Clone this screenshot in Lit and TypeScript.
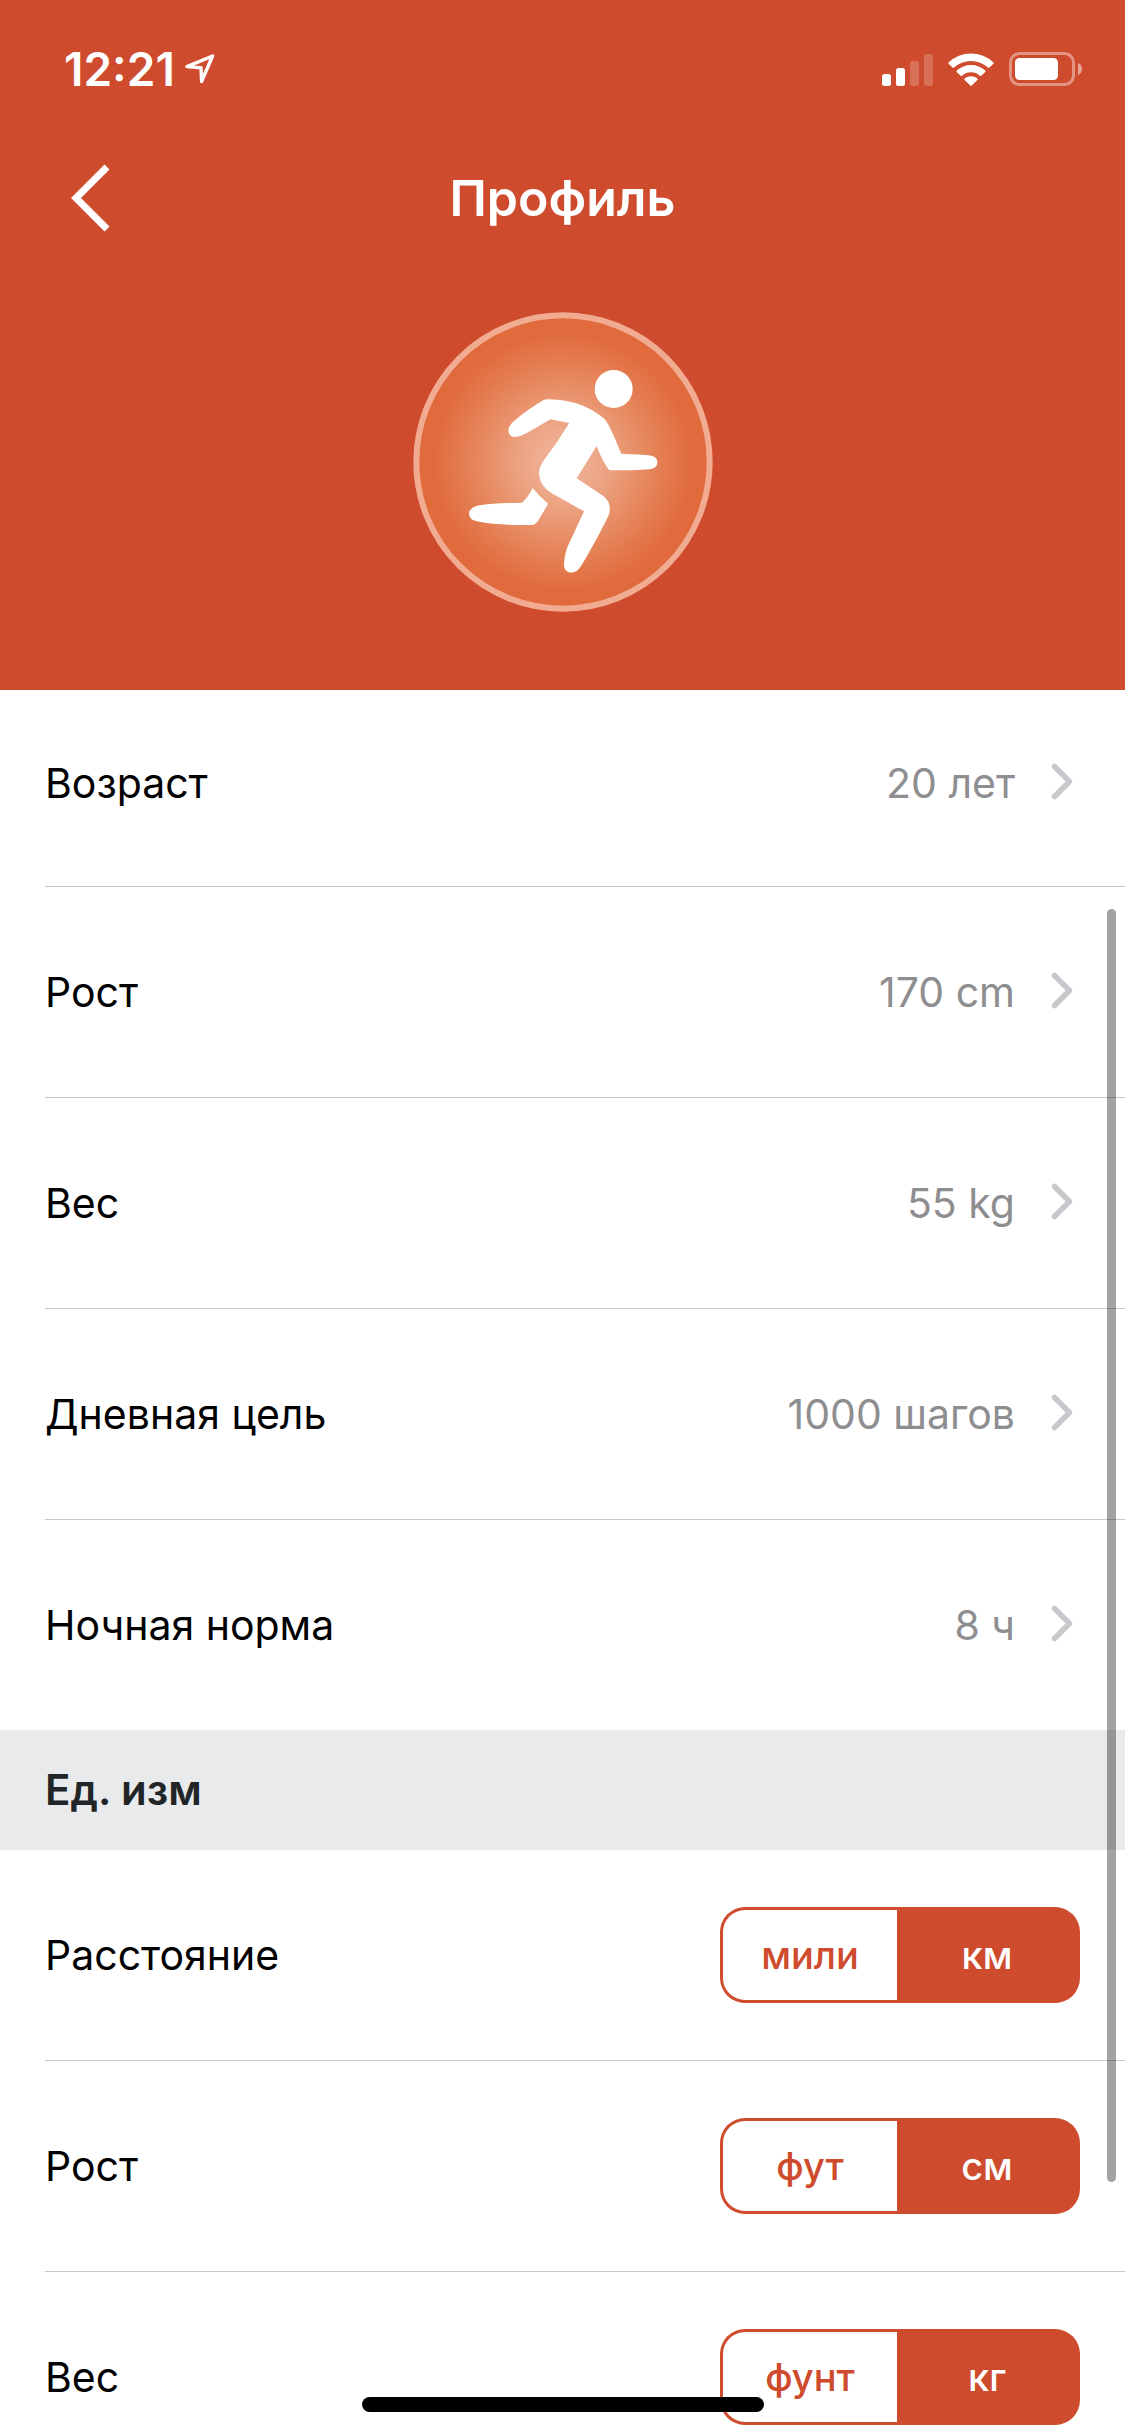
import { LitElement, html, css, svg } from "lit";
import { customElement, property, state } from "lit/decorators.js";

interface Detail {
  label: string;
  value: string;
}

interface Unit {
  id: string;
  label: string;
  options: [string, string];
}

const DETAILS: Detail[] = [
  { label: "Возраст", value: "20 лет" },
  { label: "Рост", value: "170 cm" },
  { label: "Вес", value: "55 kg" },
  { label: "Дневная цель", value: "1000 шагов" },
  { label: "Ночная норма", value: "8 ч" },
];

const UNITS: Unit[] = [
  { id: "distance", label: "Расстояние", options: ["мили", "км"] },
  { id: "height", label: "Рост", options: ["фут", "см"] },
  { id: "weight", label: "Вес", options: ["фунт", "кг"] },
];

@customElement("status-bar")
export class StatusBar extends LitElement {
  static styles = css`
    :host {
      display: flex;
      align-items: center;
      justify-content: space-between;
      height: 138px;
      padding: 0 43px 0 64px;
      color: #fff;
    }
    .clock,
    .indicators {
      display: flex;
      align-items: center;
    }
    .clock {
      gap: 10px;
      font-size: 46px;
      line-height: 54px;
      font-weight: 600;
    }
    .indicators {
      gap: 15px;
    }
    svg {
      display: block;
    }
  `;

  render() {
    const bars = [12, 18, 25, 32];
    return html`
      <div class="clock">
        <span>12:21</span>
        <svg width="30" height="30" viewBox="0 0 30 30" aria-hidden="true">
          <path d="M2 12.600 27.600 2 16.600 27.500 16 13.800Z" fill="none" stroke="#fff" stroke-width="3.400" stroke-linejoin="round" />
        </svg>
      </div>
      <div class="indicators">
        <svg width="51" height="33" viewBox="0 0 51 33" aria-hidden="true">
          ${bars.map(
            (h, i) => svg`<rect x=${i * 14} y=${33 - h} width="9" height=${h} rx="2.5" fill="#fff" fill-opacity=${i < 2 ? 1 : 0.2} />`
          )}
        </svg>
        <svg width="46" height="33" viewBox="0 0 46 33" aria-hidden="true">
          <g fill="#fff">
            <path d="M.6 9.4A32.4 32.4 0 0 1 45.4 9.4Q46 10.1 45.4 10.8L41.4 14.6Q40.7 15.2 40 14.6A25 25 0 0 0 6 14.6Q5.3 15.2 4.6 14.6L.6 10.8Q0 10.1 .6 9.4Z" />
            <path d="M8.7 17.6A20.8 20.8 0 0 1 37.3 17.6Q37.9 18.3 37.3 19L33.3 22.7Q32.6 23.3 31.9 22.7A13.2 13.2 0 0 0 14.1 22.7Q13.4 23.3 12.7 22.7L8.7 19Q8.1 18.3 8.7 17.6Z" />
            <path d="M16.6 25.6A9.6 9.6 0 0 1 29.4 25.6Q30 26.2 29.4 26.9L23.7 32.6Q23 33.2 22.3 32.6L16.6 26.9Q16 26.2 16.6 25.6Z" />
          </g>
        </svg>
        <svg width="73" height="34" viewBox="0 0 73 34" aria-hidden="true">
          <rect x="1.5" y="1.5" width="63" height="31" rx="9" fill="none" stroke="#fff" stroke-opacity=".4" stroke-width="3" />
          <rect x="6" y="6" width="43" height="22" rx="4.5" fill="#fff" />
          <path d="M69 11Q73 12.600 73 17Q73 21.400 69 23Z" fill="#fff" fill-opacity=".5" />
        </svg>
      </div>
    `;
  }
}

@customElement("profile-avatar")
export class ProfileAvatar extends LitElement {
  static styles = css`
    :host {
      display: flex;
      justify-content: center;
    }
    svg {
      display: block;
    }
  `;

  render() {
    return html`
      <svg width="300" height="300" viewBox="38 36 900 900" role="img" aria-label="Бегун">
        <defs>
          <radialGradient id="glow">
            <stop offset="0" stop-color="#f2b9a0" />
            <stop offset=".3" stop-color="#eca382" />
            <stop offset=".6" stop-color="#e6855b" />
            <stop offset=".88" stop-color="#e16b3d" />
            <stop offset="1" stop-color="#e16a3c" />
          </radialGradient>
        </defs>
        <circle cx="488" cy="486" r="440" fill="url(#glow)" stroke="#f0ab91" stroke-width="18" />
        <g fill="#fff">
          <circle cx="640" cy="267" r="57" />
          <path
            d="M443 298C478 299 520 305 550 318Q590 336 615 359C626 374 640 405 663 461C700 463 730 463 753 467Q771 471 771 487Q771 502 755 506C735 510 690 511 627 511C613 492 601 470 589 438L529 535L608 587Q634 606 627 641C612 674 560 772 538 804Q528 818 511 818Q490 814 491 793C492 770 498 748 505 733L551 634L453 579Q416 556 416 520Q416 503 427 486Q470 430 507 369L451 358L378 400C360 410 345 413 333 409Q320 398 326 382Q330 373 340 364C370 340 400 317 428 301Q434 298 443 298Z"
          />
          <path
            d="M397 564Q418 590 443 611Q428 640 411 665Q404 675 392 675C340 675 280 675 230 664Q206 658 206 641Q207 624 230 617C270 610 310 610 365 608Q385 590 397 564Z"
          />
        </g>
      </svg>
    `;
  }
}

@customElement("detail-row")
export class DetailRow extends LitElement {
  @property() label = "";
  @property() value = "";

  static styles = css`
    :host {
      display: flex;
      min-height: 210px;
    }
    .row {
      flex: 1;
      display: flex;
      align-items: center;
      gap: 36px;
      margin: 0;
      padding: 0 52px 0 0;
      border: 0;
      background: none;
      color: #000;
      font: inherit;
      text-align: left;
      cursor: pointer;
    }
    .label {
      flex: 1;
    }
    .value {
      color: #8e8e91;
    }
    svg {
      display: block;
    }
  `;

  render() {
    return html`
      <button class="row" type="button">
        <span class="label">${this.label}</span>
        <span class="value">${this.value}</span>
        <svg width="22" height="40" viewBox="0 0 22 40" aria-hidden="true">
          <path d="M3.500 3.500 18.500 18.500 3.500 33.500" fill="none" stroke="#c7c7cc" stroke-width="5.500" stroke-linecap="round" stroke-linejoin="round" />
        </svg>
      </button>
    `;
  }
}

@customElement("unit-row")
export class UnitRow extends LitElement {
  @property({ attribute: false }) unit!: Unit;
  @state() private selected = 1;

  static styles = css`
    :host {
      display: block;
    }
    .row {
      display: flex;
      align-items: center;
      justify-content: space-between;
      min-height: 210px;
      padding-right: 45px;
    }
    .segments {
      display: grid;
      grid-template-columns: 174fr 180fr;
      box-sizing: border-box;
      width: 360px;
      height: 96px;
      padding: 3px;
      border-radius: 25px;
      background: #cf4b2e;
      color: #fff;
      font-size: 38px;
      line-height: 48px;
      font-weight: 500;
    }
    .segment {
      position: relative;
      display: flex;
      align-items: center;
      justify-content: center;
      cursor: pointer;
    }
    .segment.off {
      background: #fff;
      color: #cf4b2e;
    }
    .segment:first-child {
      border-radius: 22px 0 0 22px;
    }
    .segment:last-child {
      border-radius: 0 22px 22px 0;
    }
    .choice {
      position: absolute;
      inset: 0;
      margin: 0;
      opacity: 0;
      cursor: pointer;
    }
  `;

  render() {
    const { id, label, options } = this.unit;
    return html`
      <div class="row">
        <span id="name">${label}</span>
        <div class="segments" role="radiogroup" aria-labelledby="name">
          ${options.map(
            (option, i) => html`
              <label class="segment ${i === this.selected ? "on" : "off"}">
                <input
                  class="choice"
                  type="radio"
                  name=${id}
                  .checked=${i === this.selected}
                  @change=${() => (this.selected = i)}
                />
                <span>${option}</span>
              </label>
            `
          )}
        </div>
      </div>
    `;
  }
}

@customElement("app-root")
export class AppRoot extends LitElement {
  static styles = css`
    :host {
      position: relative;
      display: flex;
      flex-direction: column;
      height: 100vh;
      overflow: hidden;
      background: #fff;
      color: #000;
      font-family: Inter, "Liberation Sans", sans-serif;
      font-size: 41px;
      line-height: 52px;
    }
    .header {
      flex: none;
      padding-bottom: 78px;
      background: #cf4b2e;
      color: #fff;
    }
    .nav {
      display: grid;
      grid-template-columns: 1fr auto 1fr;
      align-items: center;
      height: 120px;
      margin-bottom: 54px;
      padding: 0 60px;
    }
    .back {
      justify-self: start;
      margin: 0;
      padding: 10px;
      border: 0;
      background: none;
      cursor: pointer;
    }
    .back svg {
      display: block;
    }
    .title {
      margin: 0;
      font-size: 50px;
      line-height: 60px;
      font-weight: 600;
    }
    .content {
      flex: 1;
      min-height: 0;
      overflow-y: auto;
      scrollbar-width: none;
    }
    .list {
      margin: 0;
      padding: 0 0 0 45px;
      list-style: none;
    }
    .item + .item {
      border-top: 1px solid #c8c7cc;
    }
    .first {
      min-height: 186px;
      padding-bottom: 10px;
    }
    .section {
      margin: 0;
      padding: 34px 45px;
      background: #e9eaec;
      color: #222528;
      font-size: 42px;
      line-height: 52px;
      font-weight: 600;
    }
    .thumb {
      position: absolute;
      top: 909px;
      right: 9px;
      bottom: 254px;
      width: 9px;
      border-radius: 5px;
      background: rgba(0, 0, 0, 0.36);
      pointer-events: none;
    }
    .home {
      position: absolute;
      bottom: 24px;
      left: 50%;
      width: 402px;
      height: 15px;
      margin-left: -201px;
      border-radius: 8px;
      background: #000;
      pointer-events: none;
    }
  `;

  render() {
    return html`
      <header class="header">
        <status-bar></status-bar>
        <nav class="nav">
          <button class="back" type="button" aria-label="Назад">
            <svg width="40" height="68" viewBox="0 0 40 68" aria-hidden="true">
              <path d="M37 3 6 34 37 65" fill="none" stroke="#fff" stroke-width="7" />
            </svg>
          </button>
          <h1 class="title">Профиль</h1>
        </nav>
        <profile-avatar></profile-avatar>
      </header>
      <main class="content">
        <ul class="list">
          ${DETAILS.map(
            (d, i) => html`
              <li class="item">
                <detail-row class=${i === 0 ? "first" : ""} label=${d.label} value=${d.value}></detail-row>
              </li>
            `
          )}
        </ul>
        <h2 class="section">Ед. изм</h2>
        <ul class="list">
          ${UNITS.map((u) => html`<li class="item"><unit-row .unit=${u}></unit-row></li>`)}
        </ul>
      </main>
      <div class="thumb"></div>
      <div class="home"></div>
    `;
  }
}
